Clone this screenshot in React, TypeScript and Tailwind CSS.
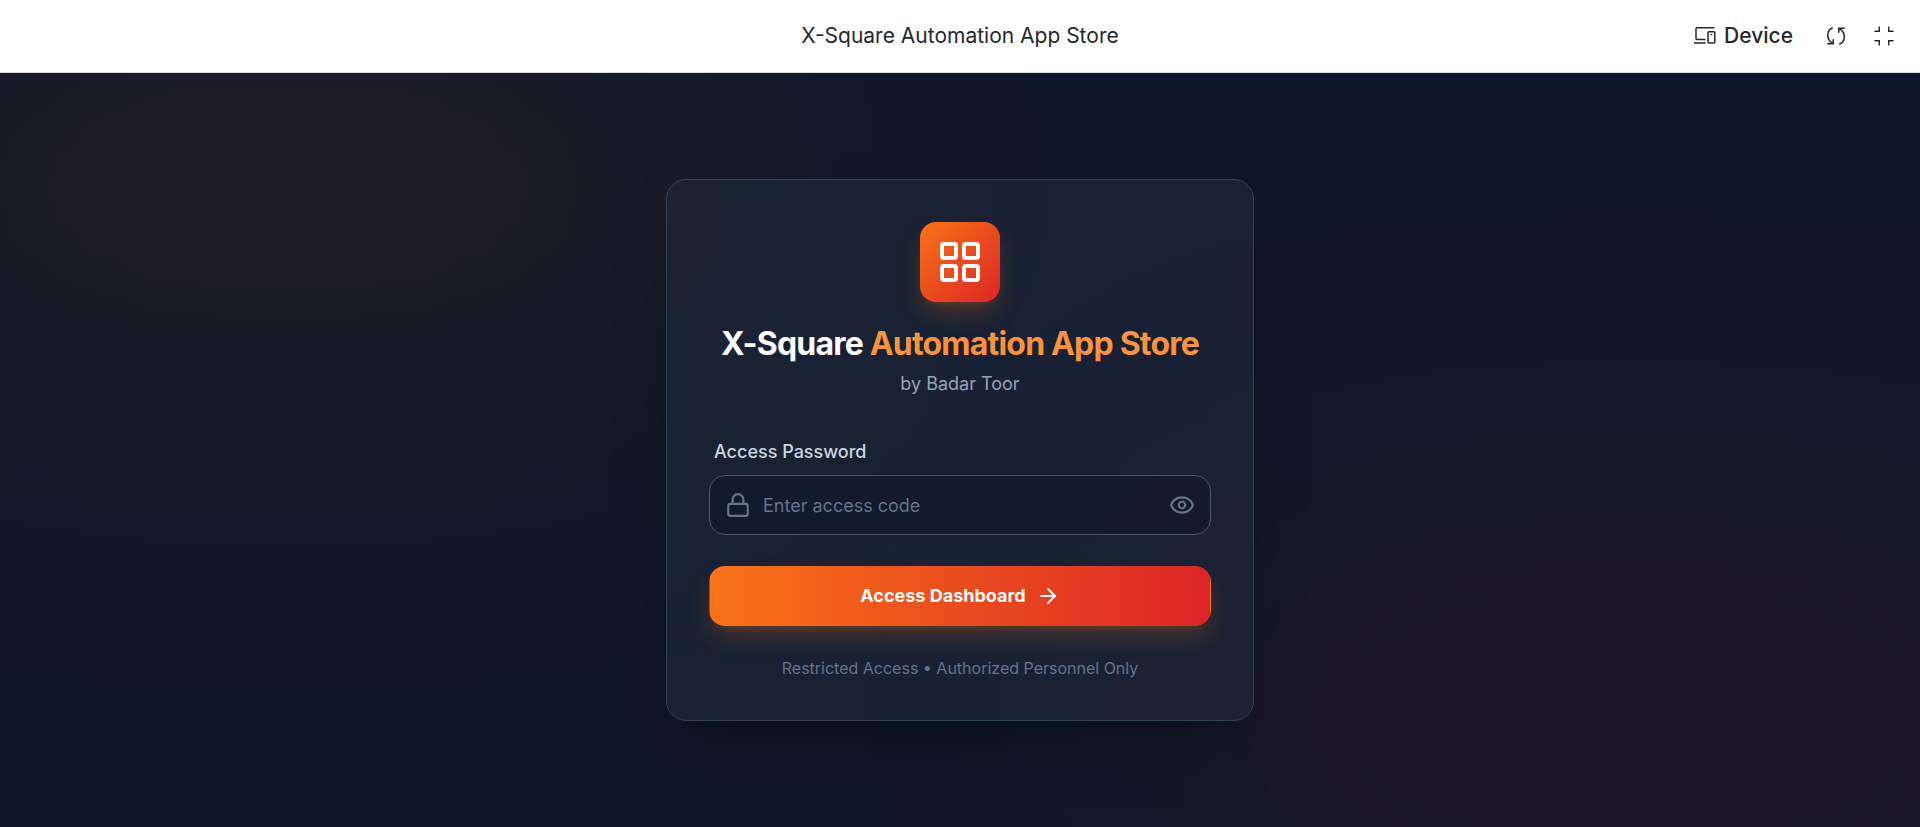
import { useState } from "react";
import { ArrowRight, Eye, Lock } from "lucide-react";

function DeviceIcon() {
  return (
    <svg width="24" height="20" viewBox="0 0 24 20" fill="none" stroke="currentColor" strokeWidth="1.5" aria-hidden="true">
      <path d="M21.500 1.700H4a1 1 0 0 0-1 1V12.500a1 1 0 0 0 1 1H12.500M1 17H12.500" />
      <rect x="15" y="5.700" width="6.800" height="11.300" rx="1" />
      <path d="M17.700 8.600h1.500" />
    </svg>
  );
}

function RefreshIcon() {
  return (
    <svg width="20" height="20" viewBox="0 0 20 20" fill="none" stroke="currentColor" strokeWidth="1.5" aria-hidden="true">
      <path d="M6.700 1.700C3.500 3 1.700 6 1.700 9.300c0 3.400 1.800 6.200 5 8M1.300 17.700H7.200V13.300" />
      <path d="M13.300 18.300c3.200-1.300 5-4.300 5-7.600 0-3.400-1.800-6.200-5-8M18.700 2.300H12.800V6.700" />
    </svg>
  );
}

function CollapseIcon() {
  return (
    <svg width="20" height="20" viewBox="0 0 20 20" fill="none" stroke="currentColor" strokeWidth="1.4" aria-hidden="true">
      <path d="M0.500 5.300H5.300V0.500M14.700 0.500V5.300H19.500M0.500 14.700H5.300V19.500M19.500 14.700H14.700V19.500" />
    </svg>
  );
}

function GridIcon() {
  return (
    <svg width="40" height="40" viewBox="0 0 40 40" fill="none" stroke="white" strokeWidth="4" aria-hidden="true">
      <rect x="2" y="2" width="14" height="14" rx="2" />
      <rect x="24" y="2" width="14" height="14" rx="2" />
      <rect x="2" y="24" width="14" height="14" rx="2" />
      <rect x="24" y="24" width="14" height="14" rx="2" />
    </svg>
  );
}

export default function App() {
  const [visible, setVisible] = useState(false);

  return (
    <div className="flex min-h-screen flex-col bg-[#0f172a] font-['Inter',sans-serif]">
      <header className="grid h-[73px] grid-cols-[1fr_auto_1fr] items-center border-b border-[#d9dbe0] bg-white px-[26px] text-[21px] text-[#26272b]">
        <p className="col-start-2">X-Square Automation App Store</p>
        <div className="flex items-center justify-end gap-7">
          <button type="button" className="mr-[5px] flex items-center gap-[7px] font-medium">
            <DeviceIcon />
            Device
          </button>
          <button type="button" aria-label="Refresh">
            <RefreshIcon />
          </button>
          <button type="button" aria-label="Exit full screen">
            <CollapseIcon />
          </button>
        </div>
      </header>

      <main className="relative flex flex-1 items-center justify-center overflow-hidden">
        <div className="absolute -top-[10%] -left-[10%] h-1/2 w-1/2 rounded-full bg-[#f97316]/9 blur-[170px]" />
        <div className="absolute -right-[10%] -bottom-[10%] h-1/2 w-1/2 rounded-full bg-[#dc2626]/10 blur-[170px]" />

        <section className="relative flex w-full max-w-[588px] flex-col items-center rounded-[20px] border border-[#334155] bg-[#1e293b]/60 p-[42px] shadow-[0_31px_62px_-15px_rgba(0,0,0,0.4)]">
          <div className="mb-5 flex size-20 items-center justify-center rounded-2xl bg-[linear-gradient(135deg,#f97316,#dc2626)] shadow-[0_13px_24px_-4px_rgba(249,115,22,0.25),0_5px_8px_-5px_rgba(249,115,22,0.2)]">
            <GridIcon />
          </div>
          <h1 className="text-[32px] leading-[44px] font-bold tracking-tight text-white">
            X-Square <span className="text-[#fb923c]">Automation App Store</span>
          </h1>
          <p className="mt-1.5 text-lg leading-6 text-[#94a3b8]">by Badar Toor</p>

          <form className="mt-11 w-full" onSubmit={(event) => event.preventDefault()}>
            <label htmlFor="password" className="mb-[11px] ml-[5px] block text-lg leading-6 font-medium text-[#cbd5e1]">
              Access Password
            </label>
            <div className="flex h-[60px] items-center rounded-2xl border border-[#475569] bg-[#0f172a]/60 px-[15px]">
              <Lock className="size-[26px] shrink-0 text-[#64748b]" aria-hidden="true" />
              <input
                id="password"
                type={visible ? "text" : "password"}
                placeholder="Enter access code"
                className="h-full min-w-0 flex-1 bg-transparent px-3 text-lg text-white outline-none placeholder:text-[#64748b]"
              />
              <button
                type="button"
                aria-label="Show password"
                onClick={() => setVisible(!visible)}
                className="text-[#64748b]"
              >
                <Eye className="size-[26px]" />
              </button>
            </div>
            <button
              type="submit"
              className="mt-[31px] flex h-[60px] w-full items-center justify-center gap-2.5 rounded-2xl border border-transparent bg-[linear-gradient(to_right,#f97316,#dc2626)] text-lg font-bold text-white shadow-[0_13px_24px_-4px_rgba(249,115,22,0.25),0_5px_8px_-5px_rgba(249,115,22,0.2)]"
            >
              Access Dashboard
              <ArrowRight className="size-6" aria-hidden="true" />
            </button>
          </form>

          <p className="mt-8 text-base leading-5 text-[#64748b]">Restricted Access • Authorized Personnel Only</p>
        </section>
      </main>
    </div>
  );
}
